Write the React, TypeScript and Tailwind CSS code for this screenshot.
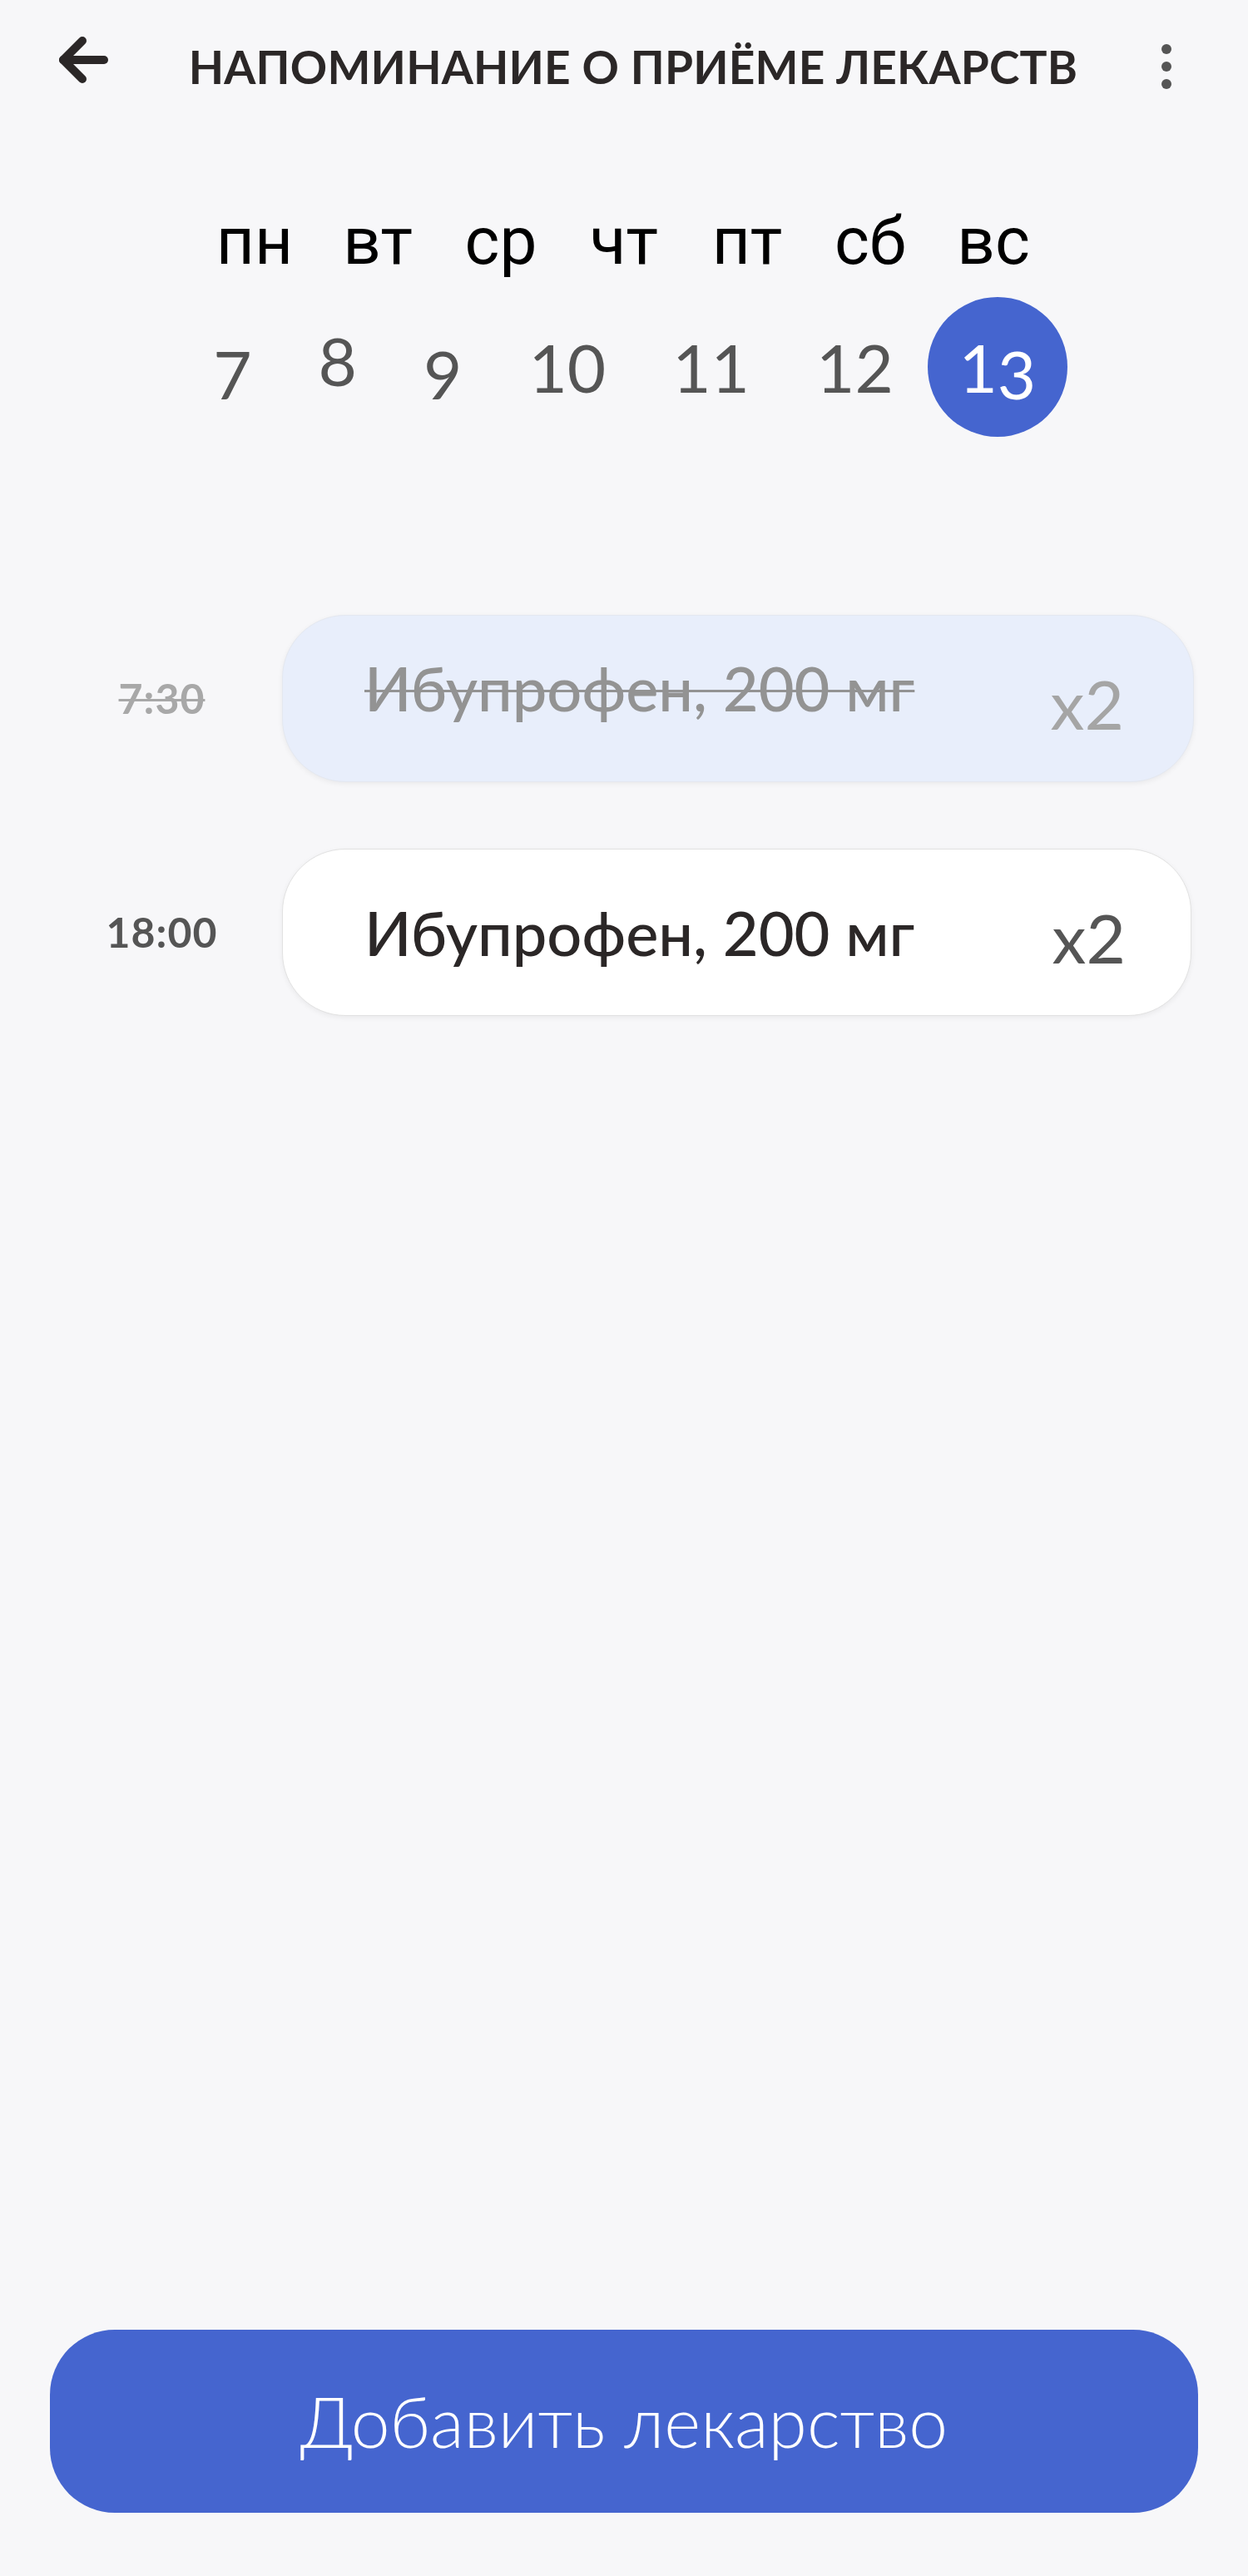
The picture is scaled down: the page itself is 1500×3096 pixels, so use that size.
import React from 'react';

const days = ['пн', 'вт', 'ср', 'чт', 'пт', 'сб', 'вс'];

function BackArrow() {
  return (
    <svg viewBox="0 0 70 70" className="w-[70px] h-[70px]" fill="none" stroke="#2b2727" strokeWidth={10} strokeLinecap="round" strokeLinejoin="round">
      <path d="M60 35H11" />
      <path d="M34 12L11 35L34 58" />
    </svg>
  );
}

function Kebab() {
  return (
    <svg viewBox="0 0 12 54" className="w-[12px] h-[54px]" fill="#555555">
      <circle cx="6" cy="6" r="6" />
      <circle cx="6" cy="27" r="6" />
      <circle cx="6" cy="48" r="6" />
    </svg>
  );
}

export default function App() {
  return (
    <div className="min-h-screen bg-[#f7f7f9] flex flex-col font-['Lato',sans-serif]">
      <header className="flex items-center h-[160px]">
        <div className="ml-[65px] mb-[16px]">
          <BackArrow />
        </div>
        <h1 className="flex-1 text-center pr-[9px] text-[55px] tracking-[0.2px] font-bold uppercase text-[#2b2727] leading-none">
          Напоминание о приёме лекарств
        </h1>
        <div className="mr-[92px]">
          <Kebab />
        </div>
      </header>

      <div className="mt-[90px] flex justify-center font-['Roboto',sans-serif] text-[80px] leading-none text-black">
        {days.map((d) => (
          <div key={d} className="w-[148px] text-center">
            {d}
          </div>
        ))}
      </div>

      <div className="mt-[71px] flex justify-center items-center gap-[80px] text-[80px] leading-none text-[#555555]">
        <span className="translate-y-[8px]">7</span>
        <span className="-translate-y-[8px]">8</span>
        <span className="translate-y-[8px]">9</span>
        <span>10</span>
        <span>11</span>
        <span>12</span>
        <div className="w-[168px] h-[168px] -mx-[39px] -my-[44px] rounded-full bg-[#4565cf] flex items-center justify-center text-white">
          <span>
            1<span className="inline-block translate-y-[8px]">3</span>
          </span>
        </div>
      </div>

      <div className="mt-[258px] flex flex-col gap-[80px]">
        <div className="flex items-center pl-[50px] pr-[65px]">
          <div className="w-[289px] text-center text-[50px] font-bold text-[#a8a8a8] line-through decoration-[3px] tracking-[1px]">
            7:30
          </div>
          <div className="flex-1 h-[201px] rounded-[76px] bg-[#e8eefb] border border-[#e4e8f0] shadow-[0_2px_6px_rgba(0,0,0,0.06)] flex items-start justify-between pl-[98px] pr-[83px]">
            <span className="mt-[50px] text-[74px] font-medium leading-none text-[#939393] line-through decoration-[3px]">
              Ибупрофен, 200 мг
            </span>
            <span className="mt-[64px] text-[82px] leading-none text-[#a5a5a5]">x2</span>
          </div>
        </div>

        <div className="flex items-center pl-[50px] pr-[68px]">
          <div className="w-[289px] text-center text-[50px] font-bold text-[#555555] tracking-[1px]">
            18:00
          </div>
          <div className="flex-1 h-[201px] rounded-[76px] bg-white border border-[#e2e2e2] shadow-[0_2px_6px_rgba(0,0,0,0.06)] flex items-start justify-between pl-[98px] pr-[78px]">
            <span className="mt-[63px] text-[74px] font-medium leading-none text-[#2b2727]">
              Ибупрофен, 200 мг
            </span>
            <span className="mt-[64px] text-[82px] leading-none text-[#555555]">x2</span>
          </div>
        </div>
      </div>

      <button className="mt-auto mb-[76px] mx-[60px] h-[220px] rounded-[78px] bg-[#4565cf] text-white text-[84px] font-light leading-none">
        Добавить лекарство
      </button>
    </div>
  );
}
